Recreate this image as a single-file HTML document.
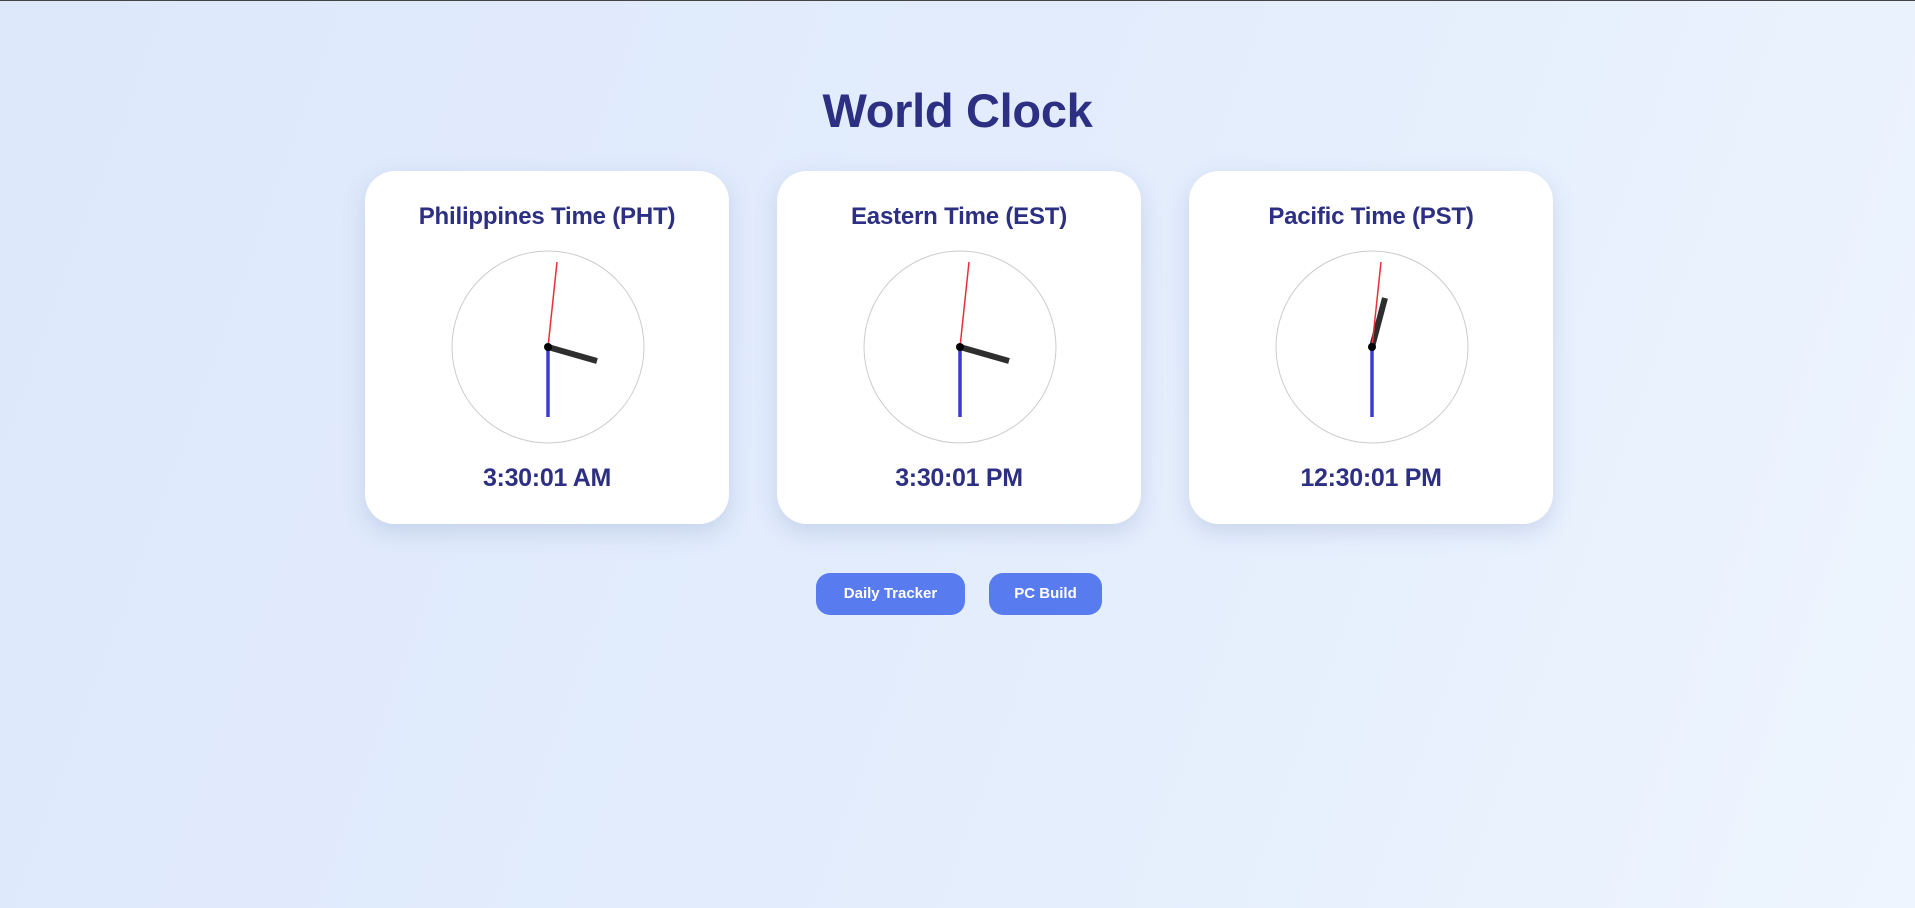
<!DOCTYPE html>
<html><head><meta charset="utf-8"><style>
*{margin:0;padding:0;box-sizing:border-box}
html,body{width:1915px;height:908px;overflow:hidden}
body{background:linear-gradient(110deg,#dde8fb 0%,#e3edfc 55%,#eef5fe 100%);font-family:"Liberation Sans",sans-serif;border-top:1px solid #444;position:relative}
h1{position:absolute;top:82px;left:0;width:1915px;text-align:center;font-size:47px;font-weight:700;color:#2c2f82;letter-spacing:-0.3px}
.card{position:absolute;top:170px;width:364px;height:353px;background:#fff;border-radius:30px;box-shadow:0 8px 22px rgba(120,140,190,.25);text-align:center}
.card h2{position:absolute;top:32px;width:100%;font-size:24px;font-weight:700;color:#2c2f82;letter-spacing:-0.2px}
.card svg{position:absolute;left:86px;top:79px}
.card .t{position:absolute;top:293px;width:100%;font-size:25px;font-weight:700;color:#2c2f82;letter-spacing:-0.3px}
.btn{position:absolute;top:572px;height:42px;background:#587cf0;border-radius:14px;color:#fff;font-weight:700;font-size:15px;line-height:42px;text-align:center}
</style></head><body>
<h1>World Clock</h1>
<div class="card" style="left:365px"><h2>Philippines Time (PHT)</h2>
<svg width="194" height="194" viewBox="-97 -97 194 194"><circle r="96" fill="#fff" stroke="#ccc" stroke-width="1"/>
<line x1="0" y1="0" x2="0" y2="70" stroke="#3b3bd0" stroke-width="3.5"/>
<line x1="0" y1="0" x2="49" y2="14" stroke="#2e2e2e" stroke-width="6"/>
<line x1="0" y1="0" x2="9" y2="-85" stroke="#e8303a" stroke-width="1.5"/>
<circle r="4" fill="#000"/></svg>
<div class="t">3:30:01 AM</div></div>
<div class="card" style="left:777px"><h2>Eastern Time (EST)</h2>
<svg width="194" height="194" viewBox="-97 -97 194 194"><circle r="96" fill="#fff" stroke="#ccc" stroke-width="1"/>
<line x1="0" y1="0" x2="0" y2="70" stroke="#3b3bd0" stroke-width="3.5"/>
<line x1="0" y1="0" x2="49" y2="14" stroke="#2e2e2e" stroke-width="6"/>
<line x1="0" y1="0" x2="9" y2="-85" stroke="#e8303a" stroke-width="1.5"/>
<circle r="4" fill="#000"/></svg>
<div class="t">3:30:01 PM</div></div>
<div class="card" style="left:1189px"><h2>Pacific Time (PST)</h2>
<svg width="194" height="194" viewBox="-97 -97 194 194"><circle r="96" fill="#fff" stroke="#ccc" stroke-width="1"/>
<line x1="0" y1="0" x2="0" y2="70" stroke="#3b3bd0" stroke-width="3.5"/>
<line x1="0" y1="0" x2="13" y2="-49" stroke="#2e2e2e" stroke-width="6"/>
<line x1="0" y1="0" x2="9" y2="-85" stroke="#e8303a" stroke-width="1.5"/>
<circle r="4" fill="#000"/></svg>
<div class="t">12:30:01 PM</div></div>
<div class="btn" style="left:816px;width:149px">Daily Tracker</div>
<div class="btn" style="left:989px;width:113px">PC Build</div>
</body></html>
